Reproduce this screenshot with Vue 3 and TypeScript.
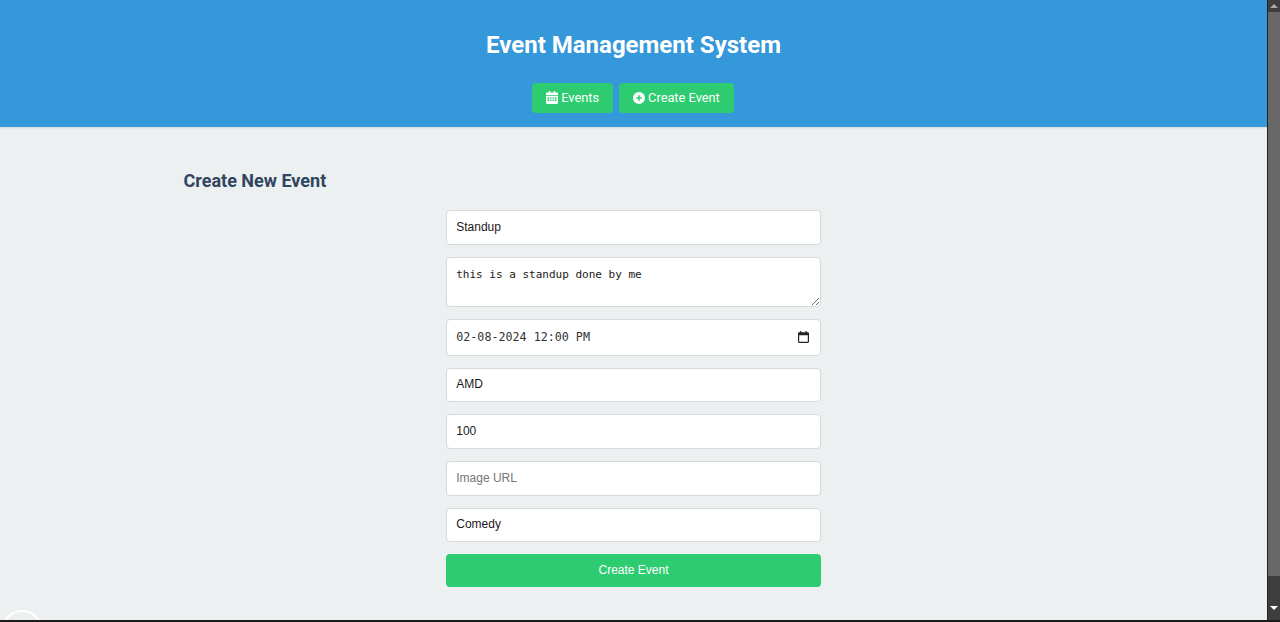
<script setup lang="ts">
const values = { title: 'Standup', description: 'this is a standup done by me', date: '02-08-2024 12:00 PM', location: 'AMD', capacity: '100', category: 'Comedy' }
</script>

<template>
  <div class="window">
    <div class="page">
      <header class="header">
        <h1 class="brand">Event Management System</h1>
        <nav class="nav">
          <a class="nav-btn">
            <svg class="ico" width="12" height="13" viewBox="0 0 13 14"><path fill="#fff" fill-rule="evenodd" d="M3 0h1.600v1.600h3.800V0H10v1.600h1.700c.7 0 1.300.6 1.300 1.300v1.600H0V2.900C0 2.200.6 1.600 1.300 1.600H3zM0 5.300h13v7.400c0 .7-.6 1.300-1.300 1.300H1.300C.6 14 0 13.400 0 12.700zM1.600 6.800v1.500h2V6.800zm3 0v1.500h1.400V6.800zm2.400 0v1.500h1.400V6.800zm2.400 0v1.500h2V6.800zm-7.800 2.500v1.400h2V9.300zm3 0v1.400h1.400V9.300zm2.400 0v1.400h1.400V9.300zm2.400 0v1.400h2V9.300z"/></svg>
            Events
          </a>
          <a class="nav-btn">
            <svg class="ico" width="12" height="12" viewBox="0 0 13 13"><path fill="#fff" fill-rule="evenodd" d="M6.500 0a6.500 6.500 0 1 1 0 13 6.500 6.500 0 0 1 0-13zM5.700 3.500v2.200H3.500v1.600h2.200v2.200h1.600V7.300h2.200V5.700H7.300V3.500z"/></svg>
            Create Event
          </a>
        </nav>
      </header>
      <main class="container">
        <h2 class="title">Create New Event</h2>
        <form class="form" @submit.prevent>
          <input class="field" type="text" :value="values.title" />
          <textarea class="field area" :value="values.description"></textarea>
          <div class="date-wrap">
            <input class="field date" type="text" :value="values.date" />
            <svg class="date-ico" width="11" height="12" viewBox="0 0 12 13"><path fill="#222" fill-rule="evenodd" d="M2.500 0h1.300v1.300h4.400V0h1.300v1.300h1.200c.7 0 1.300.6 1.300 1.300v9.100c0 .7-.6 1.300-1.300 1.300H1.300C.6 13 0 12.400 0 11.700V2.600c0-.7.6-1.300 1.300-1.300h1.200zM1.300 4.500v7.200h9.400V4.500z"/></svg>
          </div>
          <input class="field" type="text" :value="values.location" />
          <input class="field" type="text" :value="values.capacity" />
          <input class="field" type="text" placeholder="Image URL" />
          <input class="field" type="text" :value="values.category" />
          <button class="submit" type="submit">Create Event</button>
        </form>
      </main>
      <div class="badge"></div>
    </div>
    <div class="scrollbar">
      <div class="arrow up"></div>
      <div class="thumb"></div>
      <div class="arrow down"></div>
    </div>
  </div>
  <div class="edge"></div>
</template>

<style>
html, body { margin: 0; height: 622px; overflow: hidden; background: #ecf0f1; }
</style>

<style scoped>
.window { display: flex; height: 620px; }
.page { flex: 1; position: relative; overflow: hidden; background: #ecf0f1; font-family: "Liberation Sans", Arial, sans-serif; }
.header { height: 127px; box-sizing: border-box; padding-top: 31px; background: #3498db; box-shadow: 0 1px 2px rgba(0,0,0,.1); display: flex; flex-direction: column; align-items: center; }
.brand { margin: 0; font: 700 24px/28px Roboto, sans-serif; color: #fff; }
.nav { display: flex; gap: 6px; margin: 24px 1px 0 0; }
.nav-btn { height: 30px; box-sizing: border-box; padding: 0 14px 1px; display: flex; align-items: center; gap: 3px; background: #2ecc71; color: #fff; border-radius: 4px; font: 400 12.8px Roboto, sans-serif; }
.ico { flex: none; }
.container { width: 900px; margin: 0 auto; }
.title { margin: 43px 0 19px; font: 700 18px/21px Roboto, sans-serif; color: #2f4560; }
.form { width: 375.5px; margin: 0 auto; display: flex; flex-direction: column; gap: 12px; }
.field { display: block; width: 100%; height: 34.67px; box-sizing: border-box; margin: 0; padding: 0 9.5px 1px; border: 1px solid #d5d9dc; border-radius: 4px; background: #fff; color: #1a1a1a; font: 400 12px "Liberation Sans", Arial, sans-serif; outline: none; }
.field::placeholder { color: #757575; }
.area { height: 50px; padding: 10px 9.5px; font: 400 11px/13px "DejaVu Sans Mono", monospace; resize: vertical; }
.date-wrap { position: relative; }
.date { height: 37px; font: 400 11.7px "DejaVu Sans Mono", monospace; color: #333; }
.date-ico { position: absolute; right: 12.5px; top: 12px; }
.submit { height: 33px; padding: 0 0 2px; border: 0; border-radius: 4px; background: #2ecc71; color: #fff; font: 400 12px "Liberation Sans", Arial, sans-serif; }
.badge { position: absolute; left: 2px; bottom: -30px; width: 36px; height: 36px; border: 2px solid #fff; border-radius: 50%; }
.scrollbar { width: 13px; flex: none; background: #3f3e3c; display: flex; flex-direction: column; align-items: center; border-left: 1px solid #222; box-sizing: border-box; }
.arrow { flex: none; width: 0; height: 0; border-left: 4px solid transparent; border-right: 4px solid transparent; }
.up { margin-top: 4px; border-bottom: 4px solid #aaa; }
.down { margin-top: 30px; border-top: 4px solid #fff; }
.thumb { width: 100%; height: 564px; margin-top: 4px; background: #686868; }
.edge { height: 2px; background: #1b1b1b; }
</style>
